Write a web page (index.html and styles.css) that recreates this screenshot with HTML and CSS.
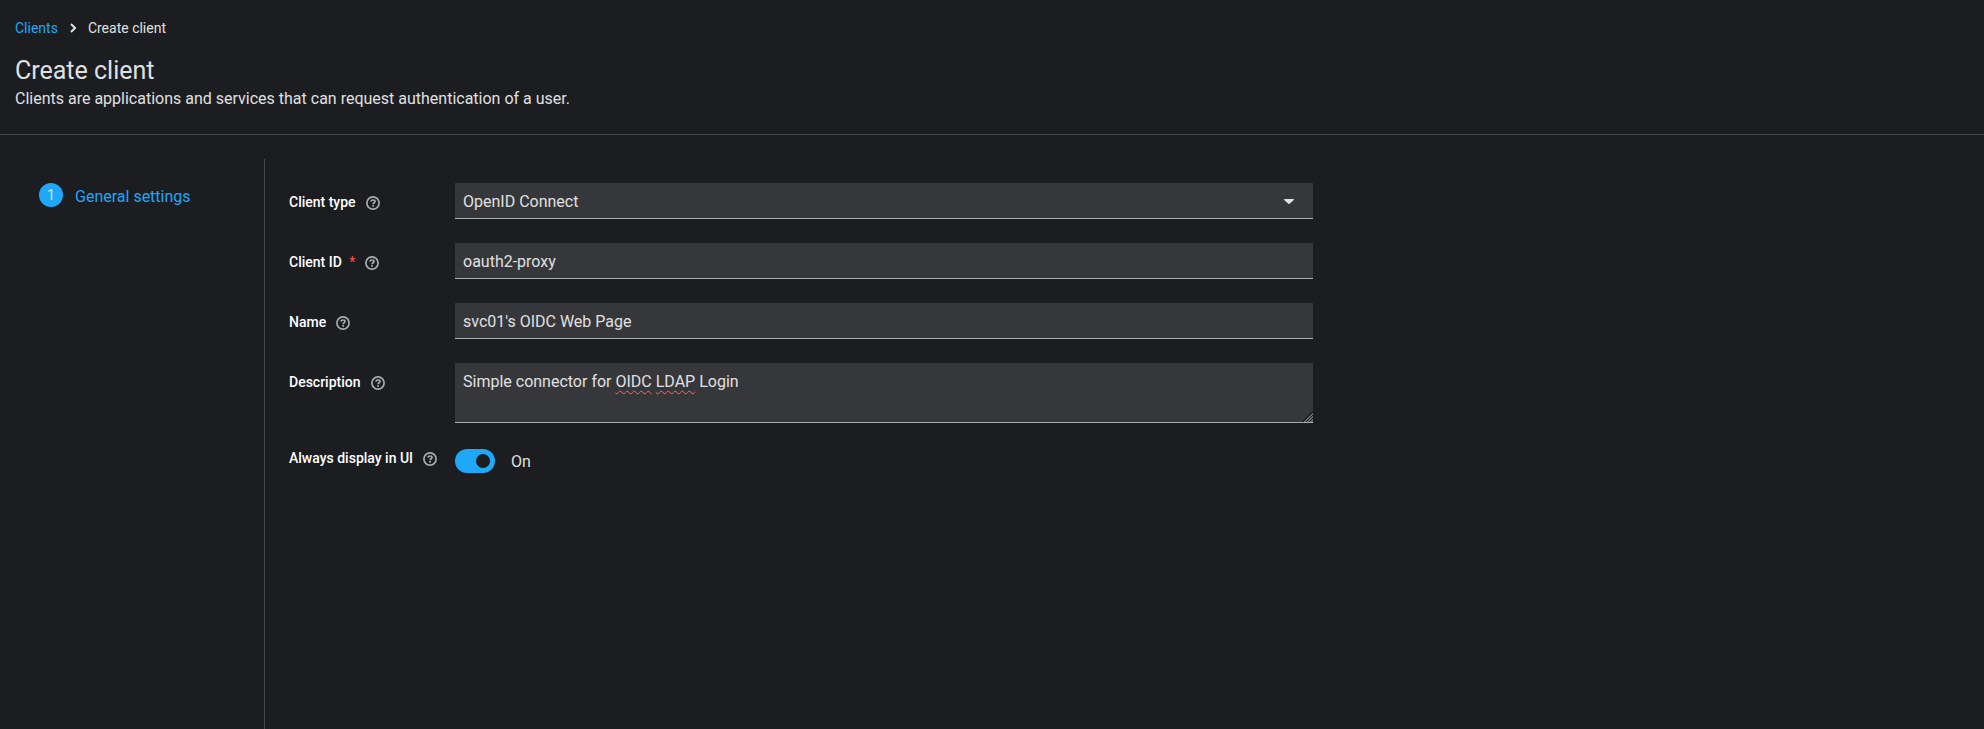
FILE: index.html
```
<!DOCTYPE html>
<html lang="en">
<head>
    <meta charset="UTF-8">
    <meta name="viewport" content="width=device-width, initial-scale=1.0">
    <title>Create client</title>
    <link rel="stylesheet" href="styles.css">
</head>
<body>
    <!-- Shared icons -->
    <svg class="icon-defs" aria-hidden="true">
        <symbol id="icon-help" viewBox="0 0 14 14">
            <circle cx="7" cy="7" r="6.1" fill="none" stroke="currentColor" stroke-width="1.7"/>
            <path d="M4.9 5.600C5.100 4.500 5.900 4 7 4c1.200 0 2 .6 2 1.500C9 6.800 7.100 6.700 7.100 8.200" fill="none" stroke="currentColor" stroke-width="1.700"/>
            <rect x="6.200" y="8.900" width="1.800" height="1.800" rx=".5" fill="currentColor"/>
        </symbol>
    </svg>

    <header class="page-header">
        <nav class="breadcrumb" aria-label="Breadcrumb">
            <a href="#">Clients</a>
            <svg class="breadcrumb-divider" viewBox="0 0 6 10" aria-hidden="true">
                <path d="M1 1l4 4-4 4" fill="none" stroke="currentColor" stroke-width="2"/>
            </svg>
            <span aria-current="page">Create client</span>
        </nav>
        <h1>Create client</h1>
        <p>Clients are applications and services that can request authentication of a user.</p>
    </header>

    <main class="wizard">
        <nav class="wizard-nav" aria-label="Wizard steps">
            <a class="wizard-step" href="#" aria-current="step">
                <span class="step-number">1</span>
                <span class="step-name">General settings</span>
            </a>
        </nav>

        <form class="form" id="clientForm">
            <div class="form-group">
                <div class="form-label">
                    <label for="clientType">Client type</label>
                    <button type="button" class="help" aria-label="Help for client type"><svg><use href="#icon-help"/></svg></button>
                </div>
                <div class="select-wrap">
                    <select class="control" id="clientType" name="clientType">
                        <option selected>OpenID Connect</option>
                        <option>SAML</option>
                    </select>
                    <svg class="caret" viewBox="0 0 10 5" aria-hidden="true">
                        <path d="M.6 0h8.800c.5 0 .8.600.4 1L5.600 4.800a.9.9 0 0 1-1.200 0L.2 1C-.2.600.1 0 .6 0z" fill="currentColor"/>
                    </svg>
                </div>
            </div>
            <div class="form-group">
                <div class="form-label">
                    <label for="clientId">Client ID <span class="required">*</span></label>
                    <button type="button" class="help" aria-label="Help for client ID"><svg><use href="#icon-help"/></svg></button>
                </div>
                <input class="control" type="text" id="clientId" name="clientId" value="oauth2-proxy" required>
            </div>
            <div class="form-group">
                <div class="form-label">
                    <label for="name">Name</label>
                    <button type="button" class="help" aria-label="Help for name"><svg><use href="#icon-help"/></svg></button>
                </div>
                <input class="control" type="text" id="name" name="name" value="svc01's OIDC Web Page">
            </div>
            <div class="form-group">
                <div class="form-label">
                    <label for="description">Description</label>
                    <button type="button" class="help" aria-label="Help for description"><svg><use href="#icon-help"/></svg></button>
                </div>
                <div class="textarea-wrap">
                    <textarea class="control" id="description" name="description" spellcheck="false">Simple connector for OIDC LDAP Login</textarea>
                    <!-- Spelling marks, laid over the words of the textarea -->
                    <div class="spelling" aria-hidden="true">Simple connector for <span>OIDC</span> <span>LDAP</span> Login</div>
                </div>
            </div>
            <div class="form-group">
                <div class="form-label form-label-switch">
                    <label for="alwaysDisplay">Always display in UI</label>
                    <button type="button" class="help" aria-label="Help for always display in UI"><svg><use href="#icon-help"/></svg></button>
                </div>
                <div class="switch-row">
                    <input class="switch" type="checkbox" role="switch" id="alwaysDisplay" name="alwaysDisplay" checked>
                    <label for="alwaysDisplay">On</label>
                </div>
            </div>
        </form>
    </main>
</body>
</html>
```
FILE: styles.css
```
* {
    margin: 0;
    padding: 0;
    box-sizing: border-box;
}

body {
    font-family: Roboto, sans-serif;
    font-size: 16px;
    line-height: 24px;
    color: #e0e0e0;
    background: #1b1d21;
    display: flex;
    flex-direction: column;
    min-height: 100vh;
}

a {
    color: #1fa7f8;
    text-decoration: none;
}

.icon-defs {
    display: none;
}

/* Header */
.page-header {
    padding: 16px 15px 23px;
    border-bottom: 1px solid #444548;
}

.breadcrumb {
    display: flex;
    align-items: center;
    gap: 12px;
    font-size: 14px;
}

.breadcrumb-divider {
    width: 6px;
    height: 10px;
}

.page-header h1 {
    margin-top: 15px;
    font-size: 25px;
    font-weight: 400;
    line-height: 32px;
}

/* Wizard */
.wizard {
    flex: 1;
    display: flex;
    padding-top: 24px;
}

.wizard-nav {
    flex: 0 0 265px;
    padding: 24px 24px 24px 39px;
    border-right: 1px solid #444548;
}

.wizard-step {
    display: flex;
    align-items: flex-start;
    gap: 12px;
}

.step-number {
    width: 24px;
    height: 24px;
    border-radius: 50%;
    background: #1fa7f8;
    color: #e0e0e0;
    font-size: 14px;
    text-align: center;
}

.step-name {
    padding-top: 2px;
}

/* Form */
.form {
    flex: 0 1 1072px;
    padding: 24px;
    display: flex;
    flex-direction: column;
    gap: 24px;
}

.form-group {
    display: grid;
    grid-template-columns: 150px 1fr;
    gap: 16px;
    align-items: start;
}

.form-label {
    display: flex;
    align-items: center;
    gap: 10px;
    padding-top: 8px;
    font-size: 14px;
    font-weight: 500;
    line-height: 22px;
    color: #fff;
    white-space: nowrap;
}

.form-label-switch {
    padding-top: 0;
}

.required {
    margin-left: 4px;
    color: #fe5142;
    font-weight: 400;
}

.help {
    display: flex;
    padding-top: 2px;
    border: none;
    background: none;
    color: #aaabac;
    cursor: pointer;
}

.help svg {
    width: 14px;
    height: 14px;
}

.control {
    display: block;
    width: 100%;
    height: 36px;
    padding: 2px 8px 0;
    border: none;
    border-bottom: 1px solid #aaabac;
    border-radius: 0;
    background: #36373a;
    color: #e0e0e0;
    font: inherit;
    appearance: none;
}

.control:focus {
    border-bottom-color: #1fa7f8;
    outline: none;
}

.select-wrap,
.textarea-wrap {
    position: relative;
}

.caret {
    position: absolute;
    top: 16px;
    right: 19px;
    width: 10px;
    height: 5px;
    pointer-events: none;
}

textarea.control {
    height: 60px;
    padding: 7px 8px;
    resize: vertical;
}

textarea.control::-webkit-resizer {
    background: linear-gradient(135deg, transparent 50%, #1b1d21 50% 57%, #6a6b6e 57% 64%, #1b1d21 64% 71%, #6a6b6e 71% 78%, #1b1d21 78% 85%, #6a6b6e 85%) bottom right / 11px 11px no-repeat;
}

.spelling {
    position: absolute;
    inset: 0;
    padding: 7px 8px;
    color: transparent;
    pointer-events: none;
}

.spelling span {
    text-decoration: underline wavy #ff6464 1px;
    text-underline-offset: 3px;
}

/* Switch */
.switch-row {
    display: flex;
    align-items: flex-start;
    gap: 16px;
    padding-top: 2px;
}

.switch-row label {
    padding-top: 1px;
}

.switch {
    width: 40px;
    height: 24px;
    padding: 5px;
    border-radius: 12px;
    background: #aaabac;
    appearance: none;
    cursor: pointer;
}

.switch::before {
    content: "";
    display: block;
    width: 14px;
    height: 14px;
    border-radius: 50%;
    background: #1b1d21;
}

.switch:checked {
    background: #1fa7f8;
}

.switch:checked::before {
    margin-left: auto;
}
```
